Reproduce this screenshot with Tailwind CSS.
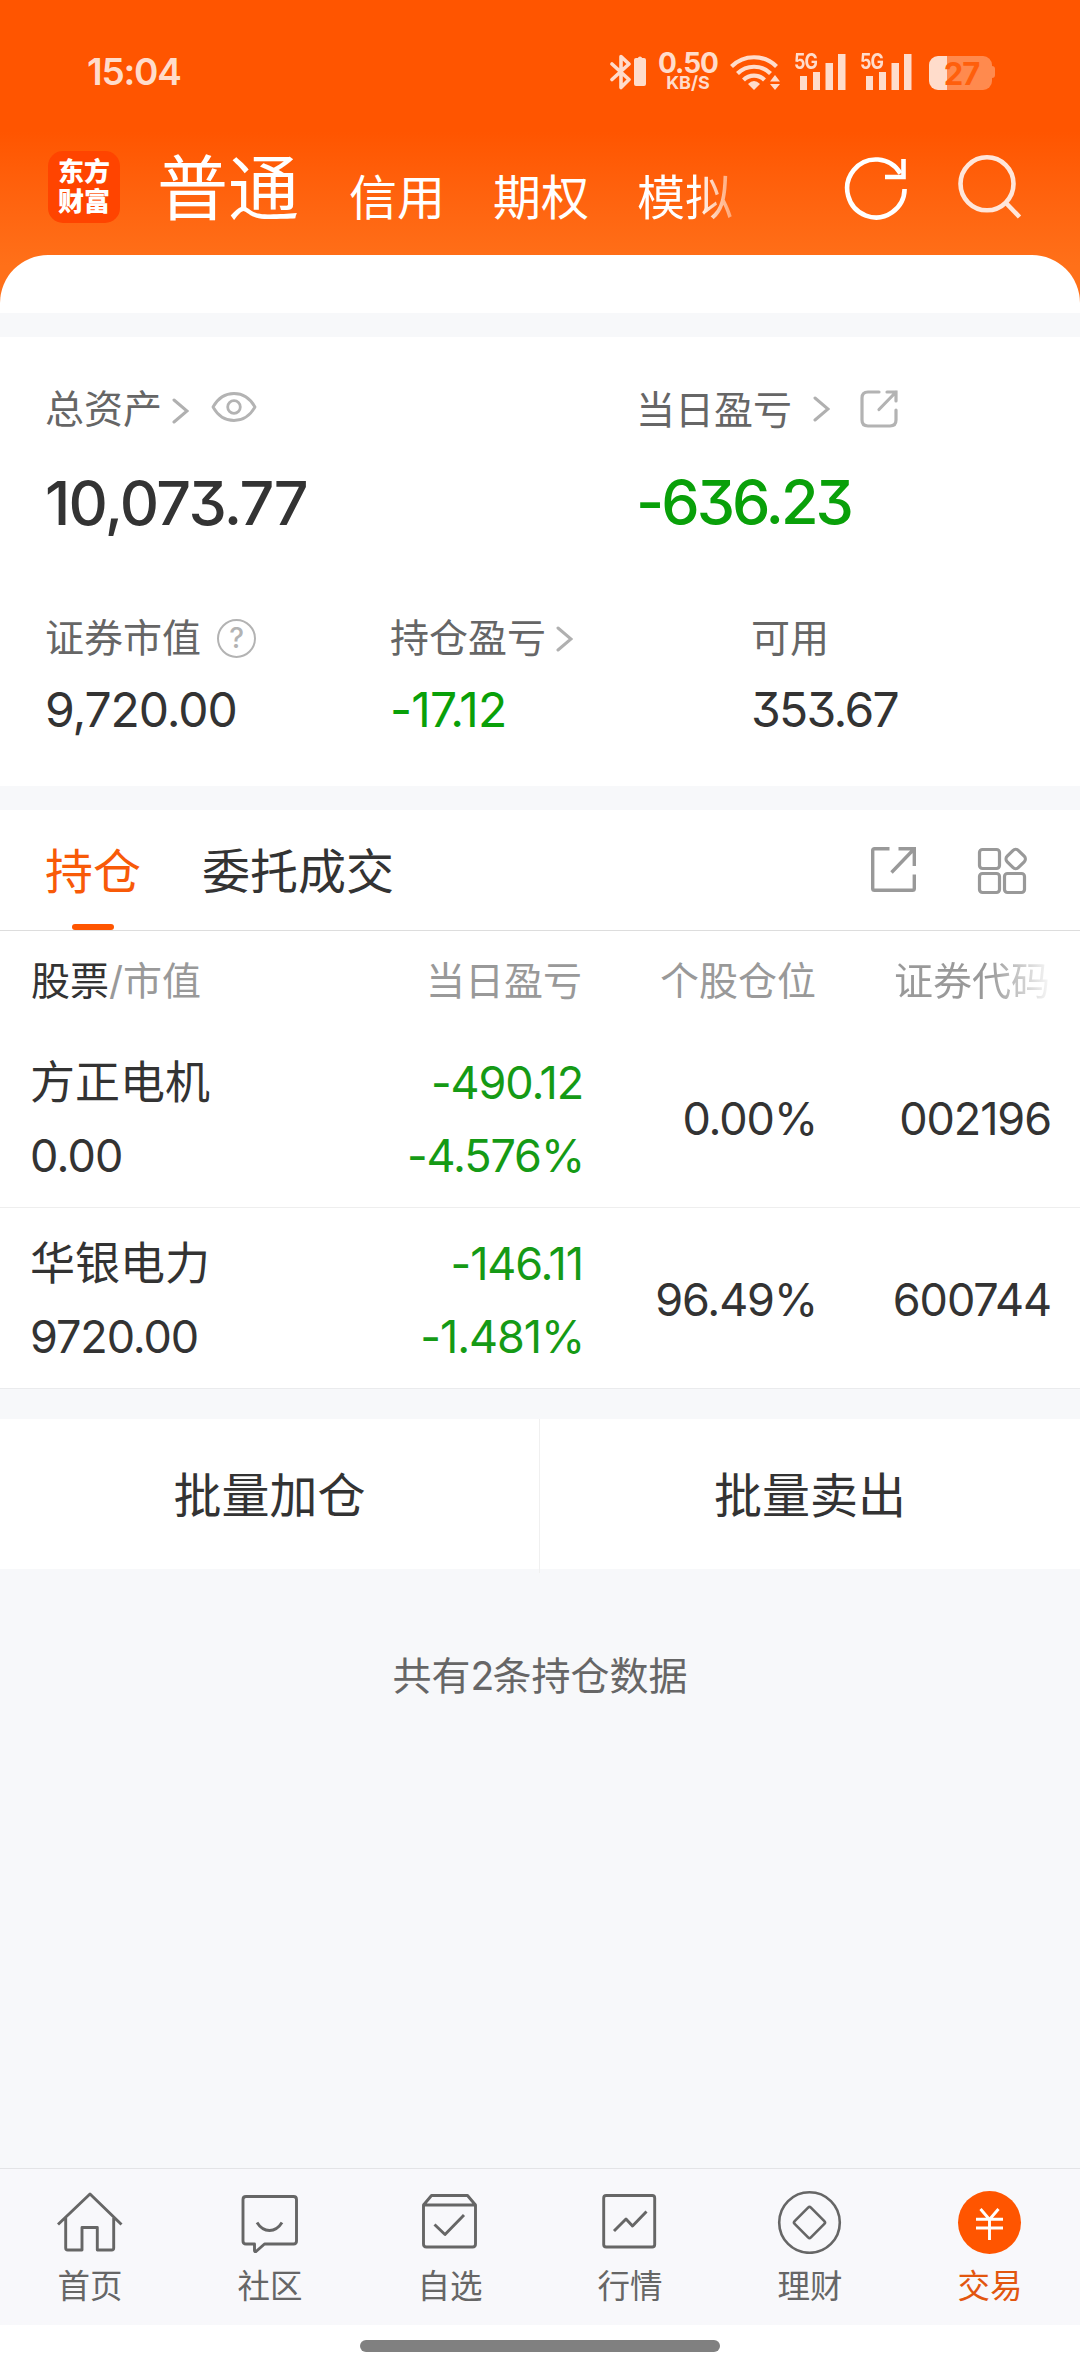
<!DOCTYPE html>
<html lang="zh-CN">
<head>
    <meta charset="UTF-8">
    <meta name="viewport" content="width=device-width, initial-scale=1.0">
    <title>交易 - 普通账户</title>
    <script src="https://cdn.jsdelivr.net/npm/@tailwindcss/browser@4"></script>
</head>
<body class="bg-[#f7f8fa]">
<div class="w-[1080px] h-[2373px] flex flex-col overflow-hidden bg-[#f7f8fa] text-[#333] font-['Inter','Noto_Sans_CJK_SC',sans-serif] [font-feature-settings:'cv09'] whitespace-nowrap">

    <!-- Header -->
    <header class="h-[313px] shrink-0 flex flex-col bg-linear-to-b from-[#ff5500] from-42% to-[#ff7019] to-85%">
        <!-- Status bar -->
        <div class="h-[144px] shrink-0 flex items-center pl-[87px] text-[#ffdccb]">
            <span class="w-[523px] text-[37px] leading-[40px] font-semibold tracking-[-1.2px]">15:04</span>
            <svg class="w-[38px] h-[40px]" viewBox="0 0 38 40" fill="none">
                <path d="M2 12 19 27.5 11 35.5V4.500L19 12 2 27.500" stroke="currentColor" stroke-width="3.600" stroke-linejoin="round" stroke-linecap="round"/>
                <path d="M24 8q0-2 2-2h2q0-1.500 2-1.500t2 1.500h2q2 0 2 2v24q0 2-2 2h-8q-2 0-2-2z" fill="currentColor"/>
            </svg>
            <div class="ml-[9px] w-[62px] flex flex-col items-center">
                <span class="text-[28px] leading-[22px] font-bold tracking-[-1px]">0.50</span>
                <span class="text-[18px] leading-[18px] font-bold">KB/S</span>
            </div>
            <svg class="ml-[11px] w-[52px] h-[40px]" viewBox="0 0 52 40" fill="none">
                <g stroke="currentColor" stroke-width="4.200">
                    <path d="M1.500 14.500a32 32 0 0 1 45 0"/>
                    <path d="M7.500 21.500a23.500 23.500 0 0 1 33 0"/>
                    <path d="M13.500 28a15 15 0 0 1 21 0"/>
                </g>
                <path d="M18 32q6-6 12 0l-6 6z" fill="currentColor"/>
                <path d="M40 29.500 45 23l5 6.500zM40 32l5 6 5-6z" fill="currentColor"/>
            </svg>
            <div class="ml-[12px] relative w-[54px] h-[40px]">
                <span class="absolute left-0 top-0 text-[21px] leading-[20px] font-bold tracking-[-1px] origin-left scale-x-85">5G</span>
                <svg class="w-[54px] h-[40px]" viewBox="0 0 54 40" fill="currentColor">
                    <path d="M6 24h7v14H6zM19 20h7v18h-7zM31.500 11H39v27h-7.500zM44 2h7.500v36H44z"/>
                </svg>
            </div>
            <div class="ml-[12px] relative w-[54px] h-[40px]">
                <span class="absolute left-0 top-0 text-[21px] leading-[20px] font-bold tracking-[-1px] origin-left scale-x-85">5G</span>
                <svg class="w-[54px] h-[40px]" viewBox="0 0 54 40" fill="currentColor">
                    <path d="M6 24h7v14H6zM19 20h7v18h-7zM31.500 11H39v27h-7.500zM44 2h7.500v36H44z"/>
                </svg>
            </div>
            <div class="ml-[15px] flex items-center">
                <div class="w-[63px] h-[34px] mt-[2px] rounded-[9px] bg-linear-to-r from-[#ffdccb] from-[18px] to-[#ff8a4e] to-[18px] text-center text-[31px] leading-[35px] font-bold tracking-[-1px] text-[#ff5f0c] pl-[2px]">27</div>
                <div class="w-[3px] h-[12px] rounded-r-[3px] bg-[#ff8a4e]"></div>
            </div>
        </div>

        <!-- Account switcher -->
        <div class="h-[111px] shrink-0 flex pl-[48px] text-white">
            <div class="mt-[7px] w-[72px] h-[72px] rounded-[15px] bg-[#ff4400] flex flex-col items-center justify-center text-[26px] leading-[30px] font-black">
                <span>东方</span>
                <span>财富</span>
            </div>
            <nav class="ml-[37px] w-[610px] flex">
                <span class="w-[192px] text-[71px] leading-[89px]">普通</span>
                <span class="w-[144px] pt-[28px] text-[48px] leading-[52px]">信用</span>
                <span class="w-[144px] pt-[28px] text-[48px] leading-[52px]">期权</span>
                <span class="pt-[28px] h-[90px] text-[48px] leading-[52px] text-transparent bg-clip-text bg-linear-to-r from-white from-62% to-white/40">模拟</span>
            </nav>
            <svg class="ml-[76px] mt-[10px] w-[68px] h-[68px]" viewBox="843 154 68 68" fill="none" stroke="#fff" stroke-width="4.600">
                <path d="M904.600 189A28.700 29 0 1 1 900.500 173.500"/>
                <path d="M885 177h18.500v-18"/>
            </svg>
            <svg class="ml-[45px] mt-[8px] w-[68px] h-[68px]" viewBox="956 152 68 68" fill="none" stroke="#ffe6da" stroke-width="4.600">
                <circle cx="987" cy="183.800" r="26.500"/>
                <path d="M1006 203l13.500 14"/>
            </svg>
        </div>
        <div class="h-[58px] bg-white rounded-t-[48px]"></div>
    </header>

    <!-- Asset summary -->
    <section class="mt-[24px] h-[449px] shrink-0 bg-white pl-[45px] pt-[46px]">
        <div class="flex">
            <div class="w-[591px]">
                <div class="h-[52px] flex items-center text-[39px] leading-[52px] text-[#666]">
                    <span>总资产</span>
                    <svg class="ml-[9px] mt-[3px] w-[18px] h-[28px]" viewBox="0 0 18 28" fill="none" stroke="#b0b0b0" stroke-width="3" stroke-linecap="round"><path d="M3 3l13 11L3 25"/></svg>
                    <svg class="ml-[21px] -mt-[4px] w-[48px] h-[36px]" viewBox="0 0 48 36" fill="none" stroke="#b3b3b3" stroke-width="2.800">
                        <path d="M3 18C8 9 15 4.500 24 4.500S40 9 45 18c-5 9-12 13.500-21 13.500S8 27 3 18z" stroke-linejoin="round"/>
                        <circle cx="24" cy="18" r="6.300"/>
                    </svg>
                </div>
                <div class="mt-[38px] text-[61px] leading-[60px] font-medium tracking-[-1.7px]">10,073.77</div>
            </div>
            <div>
                <div class="h-[52px] flex items-center text-[39px] leading-[52px] text-[#666]">
                    <span class="pt-[2px]">当日盈亏</span>
                    <svg class="ml-[20px] w-[18px] h-[28px]" viewBox="0 0 18 28" fill="none" stroke="#b0b0b0" stroke-width="3" stroke-linecap="round"><path d="M3 3l13 11L3 25"/></svg>
                    <svg class="ml-[29px] w-[40px] h-[40px]" viewBox="0 0 40 40" fill="none" stroke="#b3b3b3" stroke-width="3.200" stroke-linecap="round">
                        <path d="M20 3H9Q3 3 3 9v22q0 6 6 6h22q6 0 6-6V21"/>
                        <path d="M28 3h9v9M37 3 20 20.500"/>
                    </svg>
                </div>
                <div class="mt-[37px] text-[61px] leading-[60px] font-medium tracking-[-3px] text-[#09a009]">-636.23</div>
            </div>
        </div>

        <div class="flex mt-[79px]">
            <div class="w-[345px]">
                <div class="h-[52px] flex items-center text-[39px] leading-[52px] text-[#666]">
                    <span>证券市值</span>
                    <span class="ml-[16px] mt-[1px] w-[39px] h-[39px] rounded-full border-[2.5px] border-[#b3b3b3] text-[#b3b3b3] text-[28px] leading-[34px] font-medium text-center">?</span>
                </div>
                <div class="mt-[20px] text-[48px] leading-[52px] tracking-[-1.1px]">9,720.00</div>
            </div>
            <div class="w-[361px]">
                <div class="h-[52px] flex items-center text-[39px] leading-[52px] text-[#666]">
                    <span>持仓盈亏</span>
                    <svg class="ml-[9px] mt-[1px] w-[18px] h-[28px]" viewBox="0 0 18 28" fill="none" stroke="#b0b0b0" stroke-width="3" stroke-linecap="round"><path d="M3 3l13 11L3 25"/></svg>
                </div>
                <div class="mt-[20px] text-[48px] leading-[52px] tracking-[-0.8px] text-[#09a009]">-17.12</div>
            </div>
            <div>
                <div class="h-[52px] text-[39px] leading-[52px] text-[#666]">可用</div>
                <div class="mt-[20px] text-[48px] leading-[52px] tracking-[-1.7px]">353.67</div>
            </div>
        </div>
    </section>

    <!-- Tabs -->
    <section class="mt-[24px] h-[121px] shrink-0 bg-white border-b border-[#ddd] flex pl-[45px] text-[48px] leading-[60px]">
        <div class="w-[96px] pt-[32px] flex flex-col items-center text-[#f85a08]">
            <span>持仓</span>
            <span class="mt-[22px] w-[42px] h-[6px] rounded-full bg-[#ff5500]"></span>
        </div>
        <div class="ml-[61px] w-[192px] pt-[32px]">委托成交</div>
        <svg class="ml-[475px] mt-[35px] w-[50px] h-[50px]" viewBox="0 0 50 50" fill="none" stroke="#999" stroke-width="3.400">
            <path d="M20.500 3.700H5.500Q3.700 3.700 3.700 5.500v38q0 1.800 1.800 1.800h38q1.800 0 1.800-1.800V29.500"/>
            <path d="M29.500 3.700h15.800V21M45.300 3.700 22.500 27.500"/>
        </svg>
        <svg class="ml-[57px] mt-[36px] w-[54px] h-[54px]" viewBox="0 0 54 54" fill="none" stroke="#999" stroke-width="3.200">
            <rect x="3.500" y="3.500" width="20" height="19" rx="3"/>
            <rect x="3.500" y="27.500" width="20" height="19" rx="3"/>
            <rect x="28.500" y="27.500" width="20" height="19" rx="3"/>
            <rect x="31.700" y="5" width="16" height="16" rx="4" transform="rotate(45 39.700 13)"/>
        </svg>
    </section>

    <!-- Holdings -->
    <section class="shrink-0 bg-white">
        <div class="h-[98px] grid grid-cols-[300px_251px_234px_234px] pl-[31px] text-[39px] leading-[100px] text-[#999]">
            <span><span class="text-[#333]">股票</span>/市值</span>
            <span class="text-right">当日盈亏</span>
            <span class="text-right">个股仓位</span>
            <span class="ml-auto w-[156px] text-transparent bg-clip-text bg-linear-to-r from-[#999] from-60% to-[#f8f8f8]">证券代码</span>
        </div>
        <div class="h-[179px] grid grid-cols-[300px_253px_234px_234px] pl-[30px] border-b border-[#eee] text-[45px] leading-[60px] tracking-[-1.1px]">
            <div class="pt-[24px] flex flex-col gap-[13px]"><span class="text-[45px] tracking-normal">方正电机</span><span class="tracking-[-0.8px]">0.00</span></div>
            <div class="pt-[24px] flex flex-col gap-[13px] text-right text-[#159a15]"><span>-490.12</span><span class="-mr-[1px]">-4.576%</span></div>
            <div class="pt-[60px] text-right">0.00%</div>
            <div class="pt-[60px] text-right">002196</div>
        </div>
        <div class="h-[181px] grid grid-cols-[300px_253px_234px_234px] pl-[30px] border-b border-[#eaebed] text-[45px] leading-[60px] tracking-[-1.1px]">
            <div class="pt-[26px] flex flex-col gap-[13px]"><span class="text-[45px] tracking-normal">华银电力</span><span>9720.00</span></div>
            <div class="pt-[26px] flex flex-col gap-[13px] text-right text-[#159a15]"><span>-146.11</span><span class="-mr-[1px]">-1.481%</span></div>
            <div class="pt-[62px] text-right">96.49%</div>
            <div class="pt-[62px] text-right">600744</div>
        </div>
    </section>

    <!-- Batch actions -->
    <section class="mt-[30px] h-[150px] shrink-0 bg-white grid grid-cols-2 text-center text-[48px] leading-[154px]">
        <div class="border-r border-[#f0f0f0]">批量加仓</div>
        <div>批量卖出</div>
    </section>

    <p class="mt-[77px] text-center text-[39px] leading-[60px] text-[#666]">共有<span class="tracking-[-2px]">2</span>条持仓数据</p>

    <!-- Bottom nav -->
    <nav class="mt-auto h-[157px] shrink-0 border-t border-[#e3e4e6] bg-[#f8f8fb] grid grid-cols-6 text-center text-[32.500px] leading-[44px] text-[#666]">
        <div class="pt-[21px] flex flex-col items-center gap-[11px]">
            <svg class="w-[66px] h-[64px]" viewBox="57 2190 66 64" fill="none" stroke="#666" stroke-width="2.900" stroke-linejoin="round">
                <path d="M58 2224.500 90 2194l31.500 30.500M65.700 2218v30q0 2 2 2H82V2227.500h15.300V2250h14.400q2 0 2-2v-30"/>
            </svg>
            <span>首页</span>
        </div>
        <div class="pt-[21px] flex flex-col items-center gap-[11px]">
            <svg class="w-[66px] h-[64px]" viewBox="237 2190 66 64" fill="none" stroke="#666" stroke-width="2.900" stroke-linejoin="round">
                <path d="M246 2196.500h47.500q3 0 3 3v41.500q0 3-3 3H264.500l-8.500 7.500q-1.500.5-1.500-1V2244H246q-3 0-3-3v-41.500q0-3 3-3z"/>
                <path d="M257 2222.500q5 8 12.500 8t12.500-8"/>
            </svg>
            <span>社区</span>
        </div>
        <div class="pt-[21px] flex flex-col items-center gap-[11px]">
            <svg class="w-[66px] h-[64px]" viewBox="417 2190 66 64" fill="none" stroke="#666" stroke-width="2.900" stroke-linejoin="round">
                <path d="M423.500 2205h52v39q0 3-3 3h-46q-3 0-3-3zM423.500 2205l8-9.500h36l8 9.500"/>
                <path d="M434.500 2224.500l10.500 10 19-19.500"/>
            </svg>
            <span>自选</span>
        </div>
        <div class="pt-[21px] flex flex-col items-center gap-[11px]">
            <svg class="w-[66px] h-[64px]" viewBox="597 2190 66 64" fill="none" stroke="#666" stroke-width="2.900">
                <rect x="603.700" y="2195.500" width="51" height="51.500" rx="2.500"/>
                <path d="M614 2231l12-12 6.500 7 14-14.500" stroke-linejoin="round"/>
            </svg>
            <span>行情</span>
        </div>
        <div class="pt-[21px] flex flex-col items-center gap-[11px]">
            <svg class="w-[66px] h-[64px]" viewBox="777 2190 66 64" fill="none" stroke="#666" stroke-width="2.600">
                <circle cx="809.500" cy="2222.500" r="30.300"/>
                <rect x="798" y="2211" width="23" height="23" rx="2" transform="rotate(45 809.500 2222.500)"/>
            </svg>
            <span>理财</span>
        </div>
        <div class="pt-[21px] flex flex-col items-center gap-[11px] text-[#e2560f]">
            <svg class="w-[66px] h-[64px]" viewBox="957 2190 66 64" fill="none" stroke="#fff" stroke-width="2.900">
                <circle cx="989.500" cy="2222.500" r="31.500" fill="#ff5500" stroke="none"/>
                <path d="M980.500 2209l9 10.500 9-10.500M989.500 2219v21M976 2219.200h27M976 2228h27"/>
            </svg>
            <span>交易</span>
        </div>
    </nav>

    <!-- Gesture bar -->
    <div class="h-[48px] shrink-0 bg-white flex justify-center pt-[15px]">
        <div class="w-[360px] h-[12px] rounded-full bg-[#808080]"></div>
    </div>
</div>
</body>
</html>
